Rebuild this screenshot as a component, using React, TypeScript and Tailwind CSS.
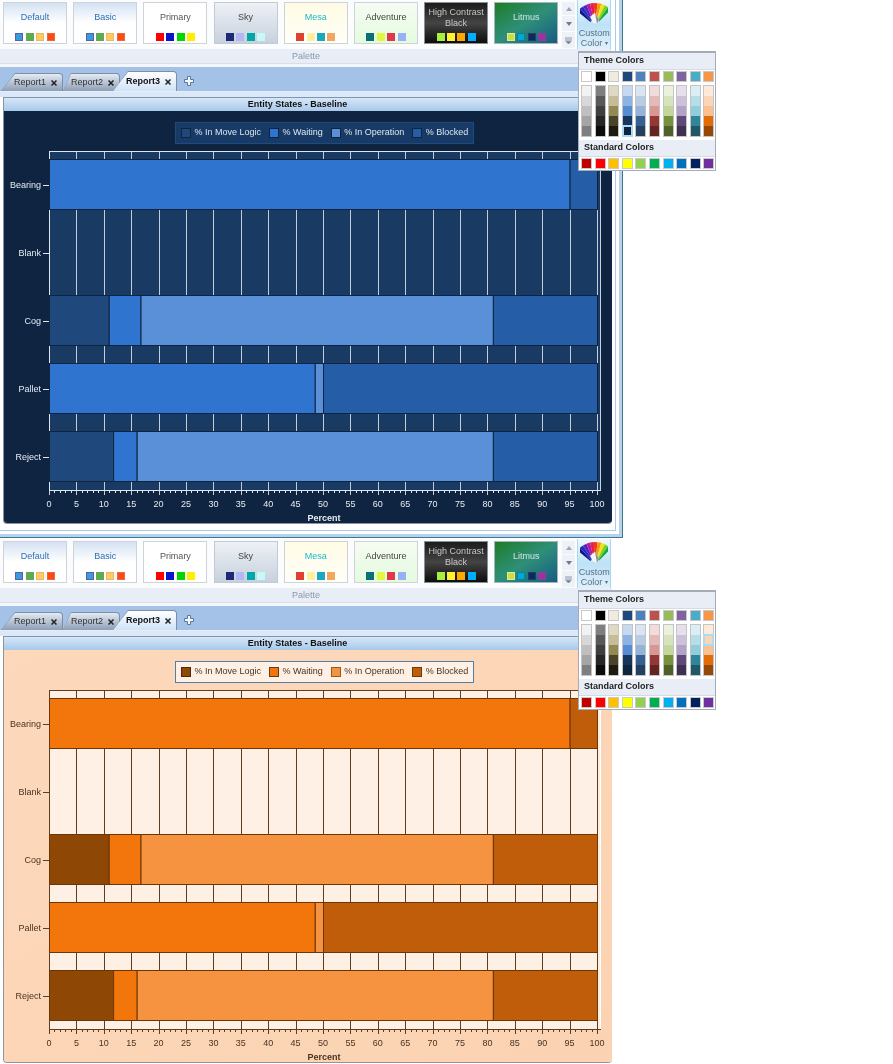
import React from "react";

// palette gallery buttons along the ribbon
const palettes = [
  { name: ["Default"], box: "bg-gradient-to-b from-[#d5e2f3] via-white to-white border-[#cfd3d8]", text: "text-[#2e70b4]", colors: ["bg-[#3a9bdc] border-[#5560a8]", "bg-[#58b048] border-[#6fa060]", "bg-[#ffcb60] border-[#e8b868]", "bg-[#ff4a14] border-[#e86840]"] },
  { name: ["Basic"], box: "bg-gradient-to-b from-[#d5e2f3] via-white to-white border-[#cfd3d8]", text: "text-[#2e70b4]", colors: ["bg-[#3a9bdc] border-[#5560a8]", "bg-[#58b048] border-[#6fa060]", "bg-[#ffcb60] border-[#e8b868]", "bg-[#ff4a14] border-[#e86840]"] },
  { name: ["Primary"], box: "bg-white border-[#cfd3d8]", text: "text-[#555555]", colors: ["bg-[#ff0000] border-[#ff0000]", "bg-[#0a14cc] border-[#0a14cc]", "bg-[#00d800] border-[#00d800]", "bg-[#ffee00] border-[#ffee00]"] },
  { name: ["Sky"], box: "bg-gradient-to-b from-[#eef1f6] to-[#c7d1dd] border-[#c4cad2]", text: "text-[#444444]", colors: ["bg-[#1c2a78] border-[#1c2a78]", "bg-[#b4b8f0] border-[#b4b8f0]", "bg-[#00a8a8] border-[#00a8a8]", "bg-[#c8f8f8] border-[#c8f8f8]"] },
  { name: ["Mesa"], box: "bg-gradient-to-b from-[#fffbe4] to-[#fffff8] border-[#cfd3d8]", text: "text-[#1cb8c8]", colors: ["bg-[#e04030] border-[#e04030]", "bg-[#fff0a0] border-[#fff0a0]", "bg-[#18a8c0] border-[#18a8c0]", "bg-[#f0a860] border-[#f0a860]"] },
  { name: ["Adventure"], box: "bg-gradient-to-b from-[#f6fcf3] to-[#e4fbdf] border-[#cfd3d8]", text: "text-[#444444]", colors: ["bg-[#0a7078] border-[#0a7078]", "bg-[#e0f840] border-[#e0f840]", "bg-[#e03848] border-[#e03848]", "bg-[#98b0f8] border-[#98b0f8]"] },
  { name: ["High Contrast", "Black"], box: "bg-gradient-to-b from-[#1c1c1c] via-[#444444] to-[#0e0e0e] border-[#8a9098]", text: "text-[#c8c8c8]", colors: ["bg-[#a8f040] border-[#a8f040]", "bg-[#fff030] border-[#fff030]", "bg-[#ffa800] border-[#ffa800]", "bg-[#00b0ff] border-[#00b0ff]"] },
  { name: ["Litmus"], box: "bg-gradient-to-br from-[#1f7c1c] via-[#2f8f78] to-[#1a5a82] border-[#a8b4bc]", text: "text-[#cfe4e0]", colors: ["bg-[#c8e040] border-[#e0e8a0]", "bg-[#00a8d8] border-[#108090]", "bg-[#102860] border-[#204060]", "bg-[#a030a0] border-[#804890]"] },
];

const topRow = ["bg-white", "bg-black", "bg-[#eeece1]", "bg-[#1f497d]", "bg-[#4f81bd]", "bg-[#c0504d]", "bg-[#9bbb59]", "bg-[#8064a2]", "bg-[#4bacc6]", "bg-[#f79646]"];
const shades = [
  ["bg-[#f2f2f2]", "bg-[#d8d8d8]", "bg-[#bfbfbf]", "bg-[#a5a5a5]", "bg-[#7f7f7f]"],
  ["bg-[#7f7f7f]", "bg-[#595959]", "bg-[#3f3f3f]", "bg-[#262626]", "bg-[#0c0c0c]"],
  ["bg-[#ddd9c3]", "bg-[#c4bd97]", "bg-[#938953]", "bg-[#494429]", "bg-[#1d1b10]"],
  ["bg-[#c6d9f0]", "bg-[#8db3e2]", "bg-[#548dd4]", "bg-[#17365d]", "bg-[#0f243e]"],
  ["bg-[#dbe5f1]", "bg-[#b8cce4]", "bg-[#95b3d7]", "bg-[#366092]", "bg-[#244061]"],
  ["bg-[#f2dcdb]", "bg-[#e5b9b7]", "bg-[#d99694]", "bg-[#953734]", "bg-[#632423]"],
  ["bg-[#ebf1dd]", "bg-[#d7e3bc]", "bg-[#c3d69b]", "bg-[#76923c]", "bg-[#4f6128]"],
  ["bg-[#e5e0ec]", "bg-[#ccc1d9]", "bg-[#b2a2c7]", "bg-[#5f497a]", "bg-[#3f3151]"],
  ["bg-[#dbeef3]", "bg-[#b7dde8]", "bg-[#92cddc]", "bg-[#31859b]", "bg-[#205867]"],
  ["bg-[#fdeada]", "bg-[#fbd5b5]", "bg-[#fac08f]", "bg-[#e36c09]", "bg-[#974806]"],
];
const standard = ["bg-[#c00000]", "bg-[#ff0000]", "bg-[#ffc000]", "bg-[#ffff00]", "bg-[#92d050]", "bg-[#00b050]", "bg-[#00b0f0]", "bg-[#0070c0]", "bg-[#002060]", "bg-[#7030a0]"];

type Theme = {
  panel: string;
  legend: string;
  legendText: string;
  swatches: string[];
  selected: [number, number];
  plot: string;
  grid: string;
  frame: string;
  axis: string;
  text: string;
  bar: string;
  fills: string[];
};

const dark: Theme = {
  panel: "bg-[#0f2440]",
  legend: "bg-[#173a66] border-[#1f4a80]",
  legendText: "text-[#dfe6ef]",
  swatches: ["bg-[#1f497d] border-[#0f2440]", "bg-[#2f75cf] border-[#0f2440]", "bg-[#5a90d8] border-[#0f2440]", "bg-[#255ea6] border-[#0f2440]"],
  selected: [3, 4],
  plot: "#193a63",
  grid: "#c3cdd9",
  frame: "#c8d2de",
  axis: "#dfe6ef",
  text: "#e6ebf2",
  bar: "#0f2440",
  fills: ["#1f497d", "#2f75cf", "#5a90d8", "#255ea6"],
};

const light: Theme = {
  panel: "bg-gradient-to-br from-[#fdd8bb] to-[#fbd3b2]",
  legend: "bg-[#fef0e4] border-[#4f81a8]",
  legendText: "text-[#4a3320]",
  swatches: ["bg-[#8f4706] border-[#4a2a10]", "bg-[#f2760c] border-[#6a3a10]", "bg-[#f59340] border-[#8a5a30]", "bg-[#bf5d0b] border-[#6a3a10]"],
  selected: [9, 1],
  plot: "#fef0e4",
  grid: "#5e3d20",
  frame: "#ffffff",
  axis: "#5e3d20",
  text: "#4a3320",
  bar: "#6b3508",
  fills: ["#8f4706", "#f2760c", "#f59340", "#bf5d0b"],
};

const rows: { name: string; y: number; parts: [number, number, number][] }[] = [
  { name: "Bearing", y: 159, parts: [[0, 95, 1], [95, 100, 3]] },
  { name: "Blank", y: 227, parts: [] },
  { name: "Cog", y: 295, parts: [[0, 10.9, 0], [10.9, 16.7, 1], [16.7, 81, 2], [81, 100, 3]] },
  { name: "Pallet", y: 363, parts: [[0, 48.5, 1], [48.5, 50, 2], [50, 100, 3]] },
  { name: "Reject", y: 431, parts: [[0, 11.7, 0], [11.7, 16, 1], [16, 81, 2], [81, 100, 3]] },
];

const legendNames = ["% In Move Logic", "% Waiting", "% In Operation", "% Blocked"];

const px = (v: number) => 49 + v * 5.48;

function Chart({ theme }: { theme: Theme }) {
  const majors = Array.from({ length: 21 }, (_, i) => i * 5);
  const minors = Array.from({ length: 101 }, (_, i) => i).filter((i) => i % 5 !== 0);
  return (
    <svg width={609} height={376} className="block mt-1 font-['Liberation_Sans',sans-serif]">
      <g transform="translate(-3,-148)">
        <rect x={49} y={151} width={552} height={339} fill={theme.plot} />
        <path d="M600.5 151V490" stroke={theme.frame} />
        {majors.map((m) => (
          <path key={m} d={`M${Math.round(px(m)) + 0.5} 151V495`} stroke={theme.grid} />
        ))}
        {minors.map((m) => (
          <path key={m} d={`M${Math.round(px(m)) + 0.5} 490V493`} stroke={theme.axis} />
        ))}
        <path d="M49 151.5H601M49 490.5H601M49.5 151V490" stroke={theme.axis} strokeWidth={1} />
        {rows.map((r) => (
          <g key={r.name}>
            {r.parts.map(([a, b, c]) => (
              <rect
                key={a}
                x={px(a) + 0.5}
                y={r.y + 0.5}
                width={(b - a) * 5.48}
                height={50}
                fill={theme.fills[c]}
                stroke={theme.bar}
              />
            ))}
            <path d={`M43 ${r.y + 26.5}H49`} stroke={theme.axis} />
            <text x={41} y={r.y + 29} textAnchor="end" fontSize={9} fill={theme.text}>
              {r.name}
            </text>
          </g>
        ))}
        {majors.map((m) => (
          <text key={m} x={px(m)} y={507} textAnchor="middle" fontSize={9} fill={theme.text}>
            {m}
          </text>
        ))}
        <text x={324} y={521} textAnchor="middle" fontSize={9} fontWeight={700} fill={theme.text}>
          Percent
        </text>
      </g>
    </svg>
  );
}

function Fan() {
  const colors = ["#15157a", "#1c2fc8", "#5a20c0", "#b01ca8", "#e81c50", "#f03a14", "#f59a10", "#f5e01a", "#7ad418", "#18a848"];
  const cx = 15;
  const cy = 26;
  const start = -141;
  const step = 9.6;
  const pt = (deg: number, r: number) => {
    const t = (deg * Math.PI) / 180;
    return `${(cx + r * Math.cos(t)).toFixed(1)},${(cy + r * Math.sin(t)).toFixed(1)}`;
  };
  return (
    <svg width={28} height={26} viewBox="0 0 28 26" className="block">
      {colors.map((c, i) => (
        <polygon key={c} points={`${pt(start + i * step, 6)} ${pt(start + i * step, 23)} ${pt(start + (i + 1) * step, 23)} ${pt(start + (i + 1) * step, 6)}`} fill={c} />
      ))}
      <polygon points="10,17 15,13 19,20 17,24 13,23" fill="#f4f4f4" />
      <polygon points="15,13 19,20 17,24" fill="#8a8f98" />
    </svg>
  );
}

function PaletteButton({ p }: { p: (typeof palettes)[number] }) {
  return (
    <div className={`w-[64px] h-[42px] border-[1.5px] flex flex-col items-center ${p.box}`}>
      <div className={`h-[30px] pb-[1px] flex flex-col justify-center items-center text-[9px] leading-[11px] ${p.text}`}>
        {p.name.map((n) => (
          <span key={n}>{n}</span>
        ))}
      </div>
      <div className="flex gap-[2.4px]">
        {p.colors.map((c) => (
          <span key={c} className={`w-2 h-2 border ${c}`} />
        ))}
      </div>
    </div>
  );
}

function Ribbon() {
  return (
    <div className="h-[49px] flex items-start bg-[#fbfcfe] pl-[3px]">
      <div className="flex gap-[6.2px] pt-[2px]">
        {palettes.map((p) => (
          <PaletteButton key={p.name[0]} p={p} />
        ))}
      </div>
      <div className="ml-[4px] w-[13px] flex flex-col gap-[1px] pt-[2px] text-[#9aa6b6]">
        <div className="h-[13px] bg-[#eef1f6] flex items-center justify-center">
          <svg width={6} height={4}><path d="M0 4L3 0L6 4Z" fill="currentColor" /></svg>
        </div>
        <div className="h-[15px] bg-[#eef1f6] flex items-center justify-center">
          <svg width={6} height={4}><path d="M0 0L3 4L6 0Z" fill="#6d7a8c" /></svg>
        </div>
        <div className="h-[16px] bg-[#eef1f6] flex items-center justify-center">
          <svg width={7} height={7}><path d="M0 1H7M0 3H7M1 4.5L3.5 7L6 4.5Z" stroke="#8d98a8" fill="#6d7a8c" /></svg>
        </div>
      </div>
      <div className="ml-[2px] w-[34px] h-[49px] flex flex-col items-center border-x border-[#a9d8f0] bg-gradient-to-b from-[#f0f8fd] via-[#bde2f8] to-[#dff0fb]">
        <Fan />
        <div className="mt-[2px] text-[9px] leading-[10.5px] text-[#5f6e82] text-center">
          Custom
          <br />
          Color <span className="text-[6px] align-middle">▾</span>
        </div>
      </div>
    </div>
  );
}

function Tab({ label, active, className, slope }: { label: string; active?: boolean; className: string; slope: string }) {
  return (
    <div className={`bg-[#7d8ea6] pt-px pr-px rounded-tr-[4px] ${slope} ${className}`}>
      <div
        className={`h-full rounded-tr-[3px] flex items-center justify-end pr-[5px] gap-[5px] text-[9px] whitespace-nowrap ${slope} ${
          active ? "bg-gradient-to-b from-white to-[#cfe3f8] font-bold text-[#111111]" : "bg-gradient-to-b from-[#e4ebf3] to-[#8e9fb5] text-[#333333]"
        }`}
      >
        <span>{label}</span>
        <svg width={6} height={6}>
          <path d="M.5 .5L5.5 5.5M5.5 .5L.5 5.5" stroke="#222222" strokeWidth={1.5} />
        </svg>
      </div>
    </div>
  );
}

function TabBar() {
  return (
    <div className="h-[25px] bg-[#a4c2e8] border-b border-[#e4eefa] flex items-end pl-px">
      <Tab label="Report1" className="w-[62px] h-[18px]" slope="[clip-path:polygon(14px_0,100%_0,100%_100%,0_100%)]" />
      <Tab label="Report2" className="w-[57px] h-[18px]" slope="[clip-path:polygon(8px_0,100%_0,100%_100%,0_100%)]" />
      <Tab label="Report3" active className="w-[64px] h-[20px] -ml-[7px]" slope="[clip-path:polygon(15px_0,100%_0,100%_100%,0_100%)]" />
      <svg width={10} height={10} className="ml-[7px] mb-[5px]">
        <path d="M3.5 .5H6.5V3.5H9.5V6.5H6.5V9.5H3.5V6.5H.5V3.5H3.5Z" fill="#f4f8fd" stroke="#5e78a0" />
      </svg>
    </div>
  );
}

function Panel({ theme }: { theme: Theme }) {
  return (
    <div className="ml-[3px] h-[427px] rounded-b-[4px] overflow-hidden border-b border-l border-[#8b95a0]">
      <div className="h-[14px] pr-[21px] border-t border-[#8095ad] bg-gradient-to-b from-[#d6e7f8] to-[#a8c9ea] flex items-center justify-center text-[9px] font-bold text-[#111111]">
        <span>Entity States - Baseline</span>
      </div>
      <div className={`h-[413px] pt-[11px] -ml-px ${theme.panel}`}>
        <div className={`ml-[172px] w-[299px] h-[22px] border flex items-center pl-[5px] text-[9px] whitespace-nowrap ${theme.legend} ${theme.legendText}`}>
          {legendNames.map((n, i) => (
            <div key={n} className="flex items-center shrink-0 mr-[8px]">
              <span className={`w-[10px] h-[10px] border mr-[3.5px] ${theme.swatches[i]}`} />
              <span>{n}</span>
            </div>
          ))}
        </div>
        <Chart theme={theme} />
      </div>
    </div>
  );
}

function ColorPopup({ theme }: { theme: Theme }) {
  return (
    <div className="absolute left-[578px] top-[51px] w-[138px] h-[120px] bg-white border border-[#a3acb8] border-t-2 text-[9px] font-bold text-[#222222]">
      <div className="h-[17px] pl-[5px] flex items-center bg-[#e9eef6] border-b border-[#d5dbe4]">Theme Colors</div>
      <div className="mt-[1px] pl-[2px] flex gap-[2.6px]">
        {topRow.map((c) => (
          <span key={c} className={`w-[11px] h-[11px] border border-[#c8c8c8] ${c}`} />
        ))}
      </div>
      <div className="mt-[3px] pl-[2px] flex gap-[2.6px]">
        {shades.map((col, i) => (
          <div key={i} className="w-[11px] border border-[#c4c4c4]">
            {col.map((c, j) => (
              <div
                key={c + j}
                className={`h-[10px] ${c} ${
                  theme.selected[0] === i && theme.selected[1] === j ? "relative outline-2 -outline-offset-1 outline-[#a8dcf8]" : ""
                }`}
              />
            ))}
          </div>
        ))}
      </div>
      <div className="mt-[3px] h-[17px] pl-[5px] flex items-center bg-[#e9eef6] border-b border-[#d5dbe4]">Standard Colors</div>
      <div className="mt-[1px] pl-[2px] flex gap-[2.6px]">
        {standard.map((c) => (
          <span key={c} className={`w-[11px] h-[11px] border border-[#c8c8c8] ${c}`} />
        ))}
      </div>
    </div>
  );
}

function Report({ theme }: { theme: Theme }) {
  return (
    <div className="relative w-[612px]">
      <Ribbon />
      <div className="h-[14px] bg-[#e9eef6] text-center text-[9px] leading-[14px] text-[#8a98ac]">Palette</div>
      <div className="h-[4px] bg-[#f4f6fa] border-t border-[#d8dfe9]" />
      <TabBar />
      <div className="h-[5px] bg-[#dbe8f7]" />
      <Panel theme={theme} />
    </div>
  );
}

export default function App() {
  return (
    <div className="w-[893px] h-[1064px] overflow-hidden bg-white blur-[0.3px] font-['Liberation_Sans',Arial,sans-serif]">
      {/* top copy has the window frame round it, bottom copy runs off the page */}
      <div className="relative h-[539px]">
        <div className="w-[623px] h-[538px] border-r border-b border-[#3e7a8a]">
          <div className="h-full border-r-[3px] border-b-[3px] border-[#b5d3ee]">
            <div className="h-full border-r-[3px] border-b-[3px] border-white">
              <div className="h-full border-r border-b border-[#a9cbe8]">
                <div className="h-full border-r-[3px] border-b-[5px] border-white">
                  <Report theme={dark} />
                </div>
              </div>
            </div>
          </div>
        </div>
        <ColorPopup theme={dark} />
      </div>
      <div className="relative">
        <Report theme={light} />
        <ColorPopup theme={light} />
      </div>
    </div>
  );
}
